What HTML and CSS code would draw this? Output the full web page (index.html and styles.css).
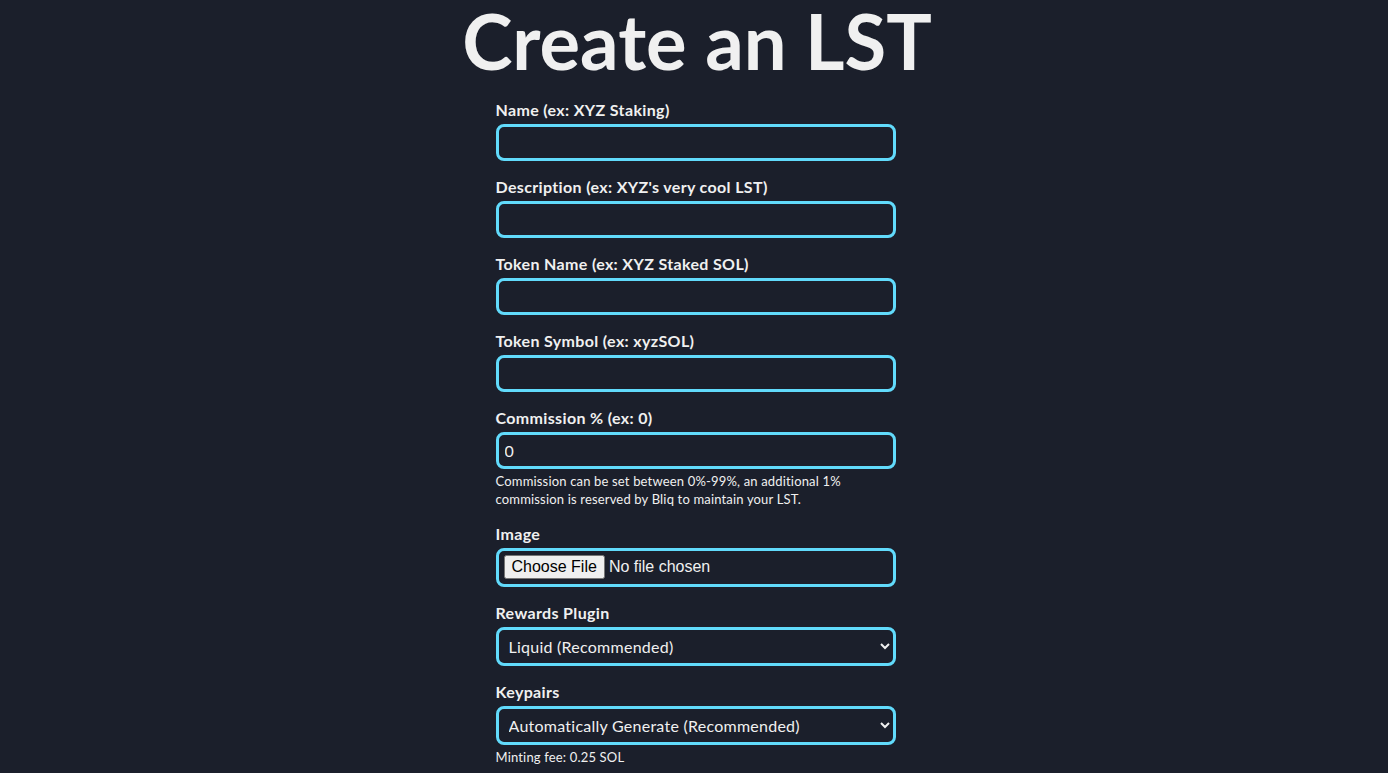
FILE: index.html
```html
<!DOCTYPE html>
<html lang="en">
<head>
<meta charset="utf-8">
<title>Create an LST</title>
<link rel="stylesheet" href="styles.css">
</head>
<body>
<main class="page">
  <h1 class="title">Create an LST</h1>
  <form class="form">
    <div class="field">
      <label class="label" for="name">Name (ex: XYZ Staking)</label>
      <input class="control" id="name" type="text">
    </div>
    <div class="field">
      <label class="label" for="desc">Description (ex: XYZ's very cool LST)</label>
      <input class="control" id="desc" type="text">
    </div>
    <div class="field">
      <label class="label" for="tname">Token Name (ex: XYZ Staked SOL)</label>
      <input class="control" id="tname" type="text">
    </div>
    <div class="field">
      <label class="label" for="tsym">Token Symbol (ex: xyzSOL)</label>
      <input class="control" id="tsym" type="text">
    </div>
    <div class="field">
      <label class="label" for="comm">Commission % (ex: 0)</label>
      <input class="control" id="comm" type="text" value="0">
      <p class="hint">Commission can be set between 0%-99%, an additional 1% commission is reserved by Bliq to maintain your LST.</p>
    </div>
    <div class="field">
      <label class="label" for="img">Image</label>
      <input class="control file" id="img" type="file">
    </div>
    <div class="field">
      <label class="label" for="plugin">Rewards Plugin</label>
      <select class="control select" id="plugin">
        <option>Liquid (Recommended)</option>
      </select>
    </div>
    <div class="field">
      <label class="label" for="keys">Keypairs</label>
      <select class="control select" id="keys">
        <option>Automatically Generate (Recommended)</option>
      </select>
      <p class="hint">Minting fee: 0.25 SOL</p>
    </div>
  </form>
</main>
</body>
</html>
```
FILE: styles.css
```css
html, body {
  margin: 0;
  padding: 0;
  background: #1b1f2b;
  color: #f0f0f0;
  font-family: Lato, "Noto Sans", sans-serif;
  overflow: hidden;
}

.page {
  display: flex;
  flex-direction: column;
  align-items: center;
}

.title {
  margin: 0;
  padding: 3px 0 0 6px;
  font-size: 76px;
  font-weight: 700;
  line-height: 76px;
  color: #f0f0f0;
}

.form {
  width: 400px;
  display: flex;
  flex-direction: column;
  padding-left: 3px;
  margin-top: 20px;
}

.field {
  display: flex;
  flex-direction: column;
  margin-bottom: 15px;
}

.label {
  font-size: 16px;
  font-weight: 700;
  line-height: 22px;
  letter-spacing: 0.35px;
  margin-bottom: 3px;
}

.control {
  box-sizing: border-box;
  width: 400px;
  height: 37px;
  border: 3px solid #61dafb;
  border-radius: 8px;
  background: #1b1f2b;
  color: #f0f0f0;
  font-family: Lato, "Noto Sans", sans-serif;
  font-size: 16px;
  padding: 0 6px;
  outline: none;
}

.file {
  height: 39px;
  padding: 4px 5px;
  font-family: "Liberation Sans", Arial, sans-serif;
}

.select {
  height: 39px;
  padding: 0 4px 0 6px;
  letter-spacing: 0.25px;
  color-scheme: dark;
}

.hint {
  margin: 3px 0 0;
  font-size: 13px;
  line-height: 18px;
  letter-spacing: 0.17px;
}
```
